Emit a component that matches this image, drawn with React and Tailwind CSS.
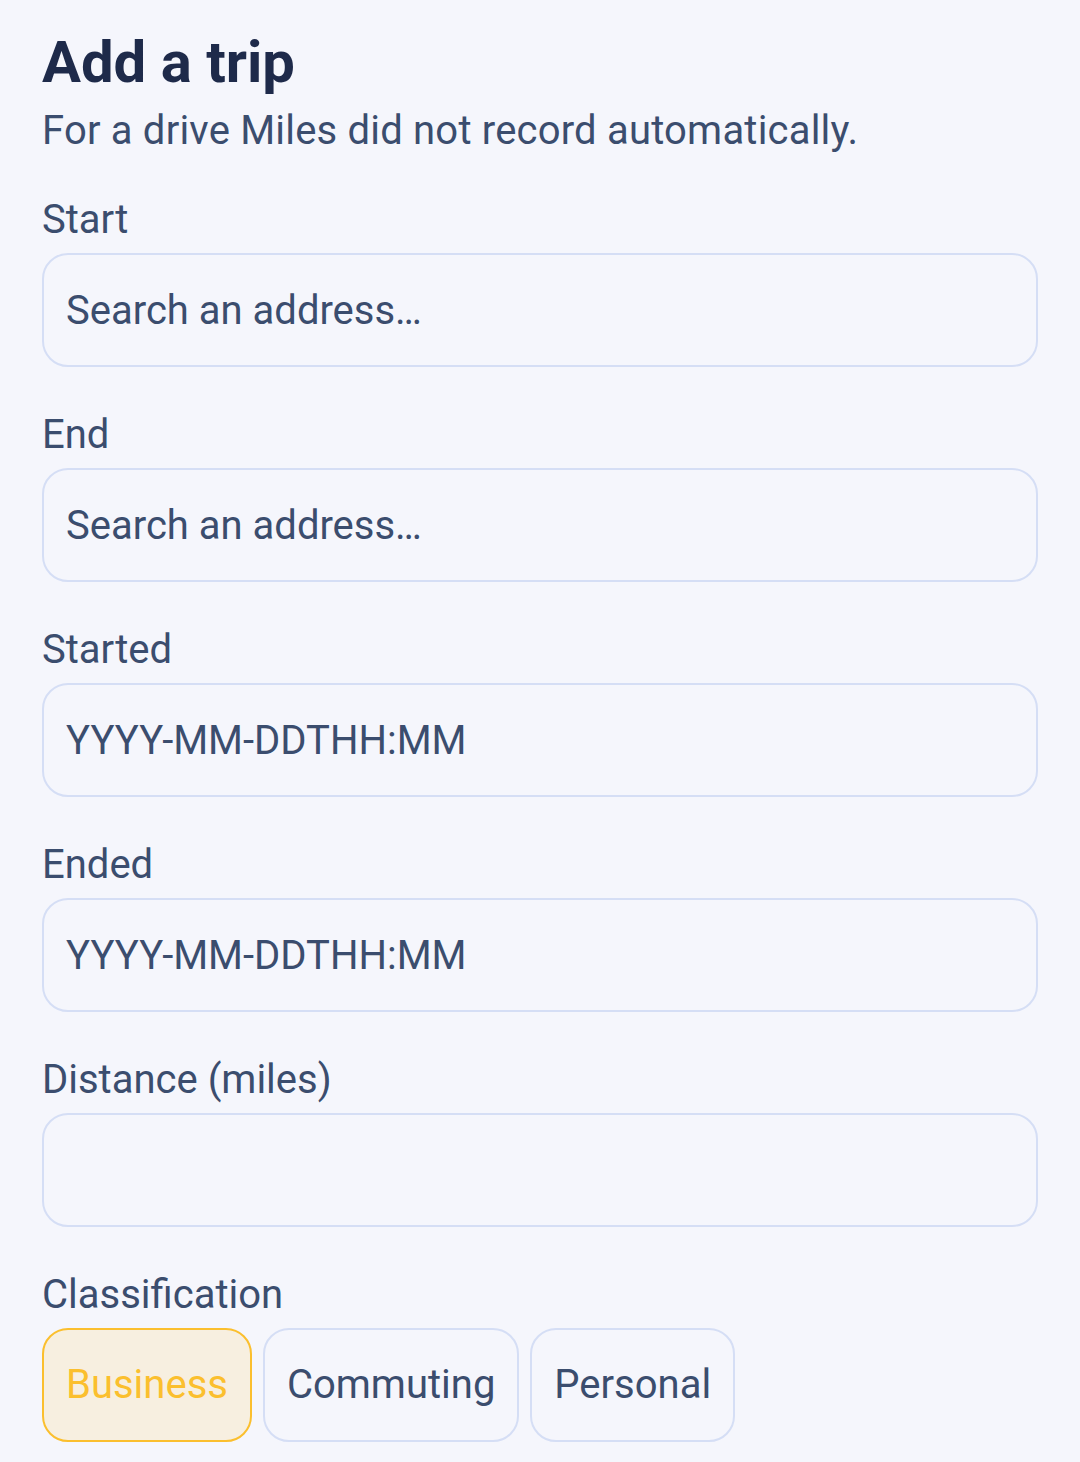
import React, { useState } from "react";

const fields = [
    { label: "Start", placeholder: "Search an address…" },
    { label: "End", placeholder: "Search an address…" },
    { label: "Started", placeholder: "YYYY-MM-DDTHH:MM" },
    { label: "Ended", placeholder: "YYYY-MM-DDTHH:MM" },
    { label: "Distance (miles)", placeholder: "" },
];

const classes = ["Business", "Commuting", "Personal"];

const App = () => {
    const [selected, setSelected] = useState("Business");
    return (
        <div className="min-h-[1462px] bg-[#f5f6fc] px-[42px] pt-[26px] font-['Roboto',sans-serif] text-[#3b4d6e]">
            {/* Header */}
            <h1 className="text-[58px] font-bold leading-[73px] text-[#1e2a4a]">Add a trip</h1>
            <p className="text-[40px] leading-[63px] tracking-[0.2px]">For a drive Miles did not record automatically.</p>

            {/* Fields */}
            <div className="mt-[26px] flex flex-col gap-[36px]">
                {fields.map((f) => (
                    <label key={f.label} className="flex flex-col gap-[2px]">
                        <span className="text-[40px] leading-[63px]">{f.label}</span>
                        <input
                            type="text"
                            placeholder={f.placeholder}
                            className="h-[114px] w-full rounded-[26px] border-2 border-[#d5def5] bg-[#f5f6fc] px-[22px] text-[40px] text-[#3b4d6e] outline-none placeholder:text-[#3b4d6e]"
                        />
                    </label>
                ))}

                {/* Classification */}
                <div className="flex flex-col gap-[2px]">
                    <span className="text-[40px] leading-[63px]">Classification</span>
                    <div className="flex gap-[11px]">
                        {classes.map((c) => (
                            <button
                                key={c}
                                onClick={() => setSelected(c)}
                                className={
                                    c === selected
                                        ? "h-[114px] rounded-[26px] border-2 border-[#fbbf2e] bg-[#f7efe0] px-[22px] text-[40px] text-[#fbbf2e]"
                                        : "h-[114px] rounded-[26px] border-2 border-[#d5def5] bg-[#f5f6fc] px-[22px] text-[40px] text-[#3b4d6e]"
                                }
                            >
                                {c}
                            </button>
                        ))}
                    </div>
                </div>
            </div>
        </div>
    );
};

export default App;
